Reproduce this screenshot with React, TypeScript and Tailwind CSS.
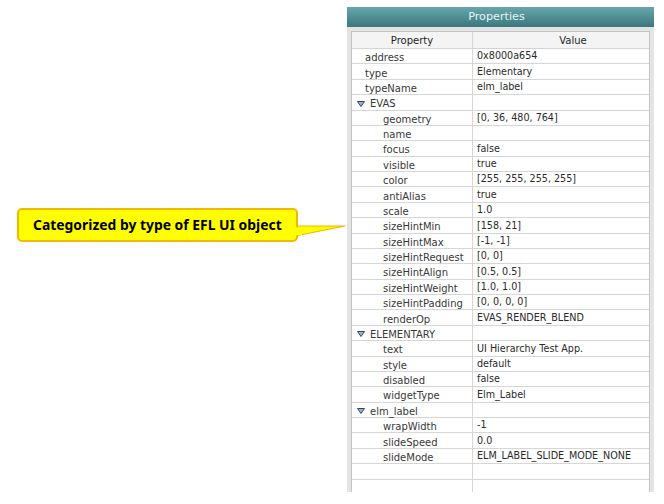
import React from "react";

type Row = { k: string; v: string; t: 0 | 1 | 2 };

const rows: Row[] = [
  { k: "address", v: "0x8000a654", t: 0 },
  { k: "type", v: "Elementary", t: 0 },
  { k: "typeName", v: "elm_label", t: 0 },
  { k: "EVAS", v: "", t: 2 },
  { k: "geometry", v: "[0, 36, 480, 764]", t: 1 },
  { k: "name", v: "", t: 1 },
  { k: "focus", v: "false", t: 1 },
  { k: "visible", v: "true", t: 1 },
  { k: "color", v: "[255, 255, 255, 255]", t: 1 },
  { k: "antiAlias", v: "true", t: 1 },
  { k: "scale", v: "1.0", t: 1 },
  { k: "sizeHintMin", v: "[158, 21]", t: 1 },
  { k: "sizeHintMax", v: "[-1, -1]", t: 1 },
  { k: "sizeHintRequest", v: "[0, 0]", t: 1 },
  { k: "sizeHintAlign", v: "[0.5, 0.5]", t: 1 },
  { k: "sizeHintWeight", v: "[1.0, 1.0]", t: 1 },
  { k: "sizeHintPadding", v: "[0, 0, 0, 0]", t: 1 },
  { k: "renderOp", v: "EVAS_RENDER_BLEND", t: 1 },
  { k: "ELEMENTARY", v: "", t: 2 },
  { k: "text", v: "UI Hierarchy Test App.", t: 1 },
  { k: "style", v: "default", t: 1 },
  { k: "disabled", v: "false", t: 1 },
  { k: "widgetType", v: "Elm_Label", t: 1 },
  { k: "elm_label", v: "", t: 2 },
  { k: "wrapWidth", v: "-1", t: 1 },
  { k: "slideSpeed", v: "0.0", t: 1 },
  { k: "slideMode", v: "ELM_LABEL_SLIDE_MODE_NONE", t: 1 },
  { k: "", v: "", t: 0 },
  { k: "", v: "", t: 0 },
];

function Tri() {
  return (
    <svg width="8" height="6" viewBox="0 0 8 6" className="mr-[5px] shrink-0 mt-[3px]">
      <polygon points="0.5,0.5 7.5,0.5 4,5.5" fill="#9fb3c8" stroke="#34465e" strokeWidth="1" />
    </svg>
  );
}

export default function App() {
  return (
    <div
      className="relative w-[664px] h-[504px] bg-white overflow-hidden"
      style={{ fontFamily: '"DejaVu Sans", sans-serif' }}
    >
      <div className="flex flex-col ml-[347px] mt-[7px] w-[307px]">
        <div className="h-[20px] flex items-center justify-center pr-[8px] bg-gradient-to-b from-[#67a7ac] to-[#3b787d] text-[#e9f3f3] text-[11.2px]">
          Properties
        </div>
        <div className="h-[465px] bg-[#e4e4e4] pl-[4px] pt-[4px] pr-[4px] overflow-hidden">
          <div className="bg-white border-l border-t border-r border-[#c4c4c4] text-[10px] text-[#383838]">
            <div className="flex h-[17px] bg-[#f4f4f4] border-b border-[#d4d4d4] text-[#1e1e1e]">
              <div className="w-[121px] border-r border-[#d4d4d4] flex items-center justify-center pt-[1px]">
                Property
              </div>
              <div className="flex-1 flex items-center justify-center pl-[24px] pt-[1px]">Value</div>
            </div>
            {rows.map((r, i) => (
              <div key={i} className="flex h-[15.39px] border-b border-[#d6d6d6]">
                <div
                  className={
                    r.t === 0
                      ? "w-[121px] border-r border-[#d6d6d6] flex items-center pl-[13px]"
                      : r.t === 1
                      ? "w-[121px] border-r border-[#d6d6d6] flex items-center pl-[31px]"
                      : "w-[121px] border-r border-[#d6d6d6] flex items-center pl-[5px]"
                  }
                >
                  {r.t === 2 && <Tri />}
                  <span className="leading-none pt-[4px]">{r.k}</span>
                </div>
                <div className="flex-1 flex items-center pl-[4px]">
                  <span className="leading-none text-[9.6px] text-[#2a2a2a]">{r.v}</span>
                </div>
              </div>
            ))}
          </div>
        </div>
      </div>

      <svg className="absolute left-[290px] top-[221px]" width="60" height="20" viewBox="0 0 60 20">
        <polygon points="0,5 55,5 0,16" fill="#ffff00" stroke="#f2b600" strokeWidth="1.2" strokeLinejoin="round" />
      </svg>
      <div
        className="absolute left-[17px] top-[208px] w-[281px] h-[34px] rounded-[5px] bg-[#ffff00] border-2 border-[#f5b800] flex items-center pl-[14px] text-[13.9px] font-bold text-black"
        style={{ fontFamily: '"Noto Sans", sans-serif' }}
      >
        Categorized by type of EFL UI object
      </div>
      <svg className="absolute left-[290px] top-[221px]" width="12" height="20" viewBox="0 0 12 20">
        <polygon points="0,6.2 12,6.2 12,14 0,14" fill="#ffff00" />
      </svg>
    </div>
  );
}
